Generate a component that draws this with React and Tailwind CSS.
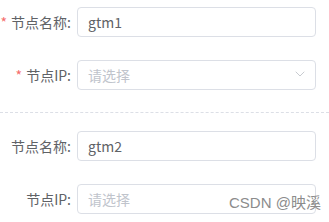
import { ChevronDown } from 'lucide-react';

const font = { fontFamily: '"Noto Sans CJK SC", "Noto Sans", sans-serif' };

function Row({ label, required, value, placeholder, select }) {
  return (
    <div className="flex items-center h-[30px]">
      <label className="w-[77px] shrink-0 pr-[6px] text-right text-[14px] text-[#606266] leading-[30px] whitespace-nowrap">
        {required && <span className="text-[#f56c6c] mr-[4px]">*</span>}
        {label}
      </label>
      <div className="relative w-[239px] h-[30px] border border-[#dcdfe6] rounded-[4px] bg-white flex items-center pl-[10px]">
        {value ? (
          <span className="text-[14px] text-[#606266]">{value}</span>
        ) : (
          <span className="text-[14px] text-[#c0c4cc]">{placeholder}</span>
        )}
        {select && (
          <ChevronDown className="absolute right-[7px] top-[5px] w-[16px] h-[16px] text-[#b4b8bf]" strokeWidth={1.1} />
        )}
      </div>
    </div>
  );
}

export default function App() {
  return (
    <div className="relative w-[329px] h-[222px] bg-white overflow-hidden pt-[7px]" style={font}>
      <div className="flex flex-col gap-[23px]">
        <Row label="节点名称:" required value="gtm1" />
        <Row label="节点IP:" required placeholder="请选择" select />
      </div>
      <div className="mt-[22px] mb-[18px] border-t border-dashed border-[#dcdfe6]" />
      <div className="flex flex-col gap-[23px]">
        <Row label="节点名称:" value="gtm2" />
        <Row label="节点IP:" placeholder="请选择" />
      </div>
      <div
        className="absolute left-[229px] top-[193px] text-[15px] leading-[20px] text-[#8c8c8c] whitespace-nowrap"
        style={{ fontFamily: '"Liberation Sans", "Noto Sans CJK SC", sans-serif' }}
      >
        CSDN @映溪
      </div>
    </div>
  );
}
